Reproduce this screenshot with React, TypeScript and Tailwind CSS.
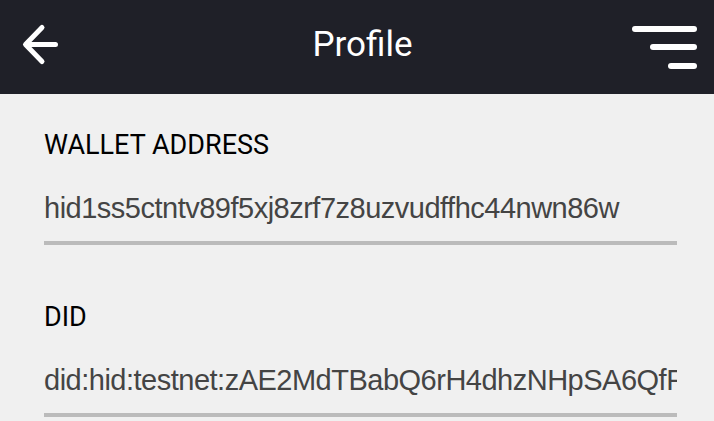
import React from 'react';

const fields = [
    { label: 'WALLET ADDRESS', value: 'hid1ss5ctntv89f5xj8zrf7z8uzvudffhc44nwn86w' },
    { label: 'DID', value: 'did:hid:testnet:zAE2MdTBabQ6rH4dhzNHpSA6QfFgcYy9Xn7wMHuVrtSe' },
];

const BackArrow = () => (
    <svg width="40" height="44" viewBox="0 0 40 44" fill="none">
        <path d="M34.5 21.5H5M21 4.5L4.5 21.5L21 38.5" stroke="white" strokeWidth="5" strokeLinecap="round" strokeLinejoin="round" />
    </svg>
);

const MenuIcon = () => (
    <div className="flex flex-col items-end gap-[12.5px]">
        <div className="h-[6px] w-[65px] rounded-full bg-white" />
        <div className="h-[6px] w-[47px] rounded-full bg-white" />
        <div className="h-[6px] w-[29px] rounded-full bg-white" />
    </div>
);

export default function App() {
    return (
        <div className="h-[421px] w-[714px] overflow-hidden bg-[#f0f0f0]" style={{ fontFamily: 'Roboto, sans-serif' }}>
            <div className="grid h-[94px] grid-cols-[1fr_auto_1fr] items-center bg-[#1f2028] pl-[21px] pr-[17px]">
                <div className="mb-[4px]">
                    <BackArrow />
                </div>
                <h1 className="mb-[5px] pl-[7px] text-[35px] font-normal leading-[40px] text-white">Profile</h1>
                <div className="flex justify-end">
                    <MenuIcon />
                </div>
            </div>

            <div className="pl-[44px] pr-[37px] pt-[38px]">
                {fields.map(field => (
                    <div key={field.label} className="mb-[59px]">
                        <div className="text-[27px] leading-[27px] text-black">{field.label}</div>
                        <div
                            className="mt-[35px] overflow-hidden whitespace-nowrap border-b-4 border-[#bbbbbb] pb-[18px] text-[29px] leading-[29px] tracking-[-0.5px] text-[#444444]"
                            style={{ fontFamily: '"Liberation Sans", Arial, sans-serif' }}
                        >
                            {field.value}
                        </div>
                    </div>
                ))}
            </div>
        </div>
    );
}
